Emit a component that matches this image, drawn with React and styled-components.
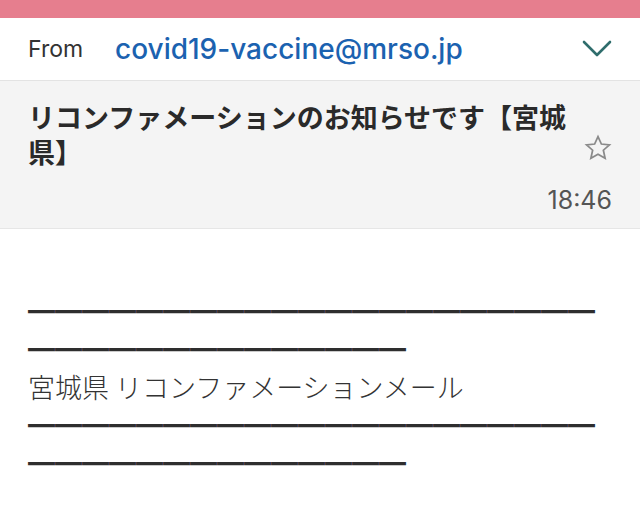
import React from "react";
import styled, { createGlobalStyle } from "styled-components";

const GlobalStyle = createGlobalStyle`
  html, body {
    margin: 0;
    padding: 0;
    background: #ffffff;
  }
  body {
    font-family: Inter, "Noto Sans CJK JP", sans-serif;
    -webkit-font-smoothing: antialiased;
  }
`;

const Page = styled.div`
  width: 640px;
  height: 526px;
  overflow: hidden;
  background: #ffffff;
`;

const TopBar = styled.div`
  height: 18px;
  background: #e67e8e;
`;

const FromRow = styled.div`
  display: flex;
  align-items: center;
  height: 62px;
  padding: 0 28px;
  border-bottom: 1px solid #e3e3e3;
`;

const FromLabel = styled.span`
  font-size: 23px;
  color: #333333;
  width: 87px;
  flex: none;
`;

const Sender = styled.span`
  flex: 1;
  font-size: 28px;
  font-weight: 500;
  color: #1b62b0;
`;

const SubjectBlock = styled.div`
  background: #f4f4f4;
  padding: 18px 28px 13px;
  border-bottom: 1px solid #e6e6e6;
`;

const SubjectRow = styled.div`
  display: flex;
  align-items: flex-end;
  justify-content: space-between;
`;

const Subject = styled.h1`
  margin: 0;
  width: 560px;
  font-family: "Noto Sans CJK JP", sans-serif;
  font-size: 27px;
  line-height: 35px;
  font-weight: 700;
  color: #2a2a2a;
`;

const StarIcon = styled.svg`
  flex: none;
  margin-bottom: 7px;
`;

const TimeRow = styled.div`
  display: flex;
  justify-content: flex-end;
  margin-top: 16px;
  font-size: 25px;
  color: #555555;
`;

const Body = styled.div`
  padding: 63px 28px 0;
`;

const BodyText = styled.p`
  margin: 0;
  width: 584px;
  font-family: "Noto Sans CJK JP", sans-serif;
  font-size: 27px;
  line-height: 38px;
  font-weight: 300;
  color: #333333;
  word-break: break-all;
`;

const Rule = styled.span`
  font-weight: 400;
  color: #2e2e2e;
`;

const Chevron = () => (
  <svg width="30" height="18" viewBox="0 0 30 18">
    <path d="M2 2 L15 15 L28 2" fill="none" stroke="#2f6d6c" strokeWidth="2.6" strokeLinecap="round" strokeLinejoin="round" />
  </svg>
);

const Star = () => (
  <StarIcon width="28" height="28" viewBox="0 0 24 24">
    <path
      d="M12 2.2 L14.9 8.6 L21.8 9.3 L16.6 13.9 L18.1 20.8 L12 17.3 L5.9 20.8 L7.4 13.9 L2.2 9.3 L9.1 8.6 Z"
      fill="none"
      stroke="#8a8a8a"
      strokeWidth="1.5"
      strokeLinejoin="miter"
    />
  </StarIcon>
);

const dashes = "━".repeat(35);

export default function App() {
  return (
    <Page>
      <GlobalStyle />
      <TopBar />
      <FromRow>
        <FromLabel>From</FromLabel>
        <Sender>covid19-vaccine@mrso.jp</Sender>
        <Chevron />
      </FromRow>
      <SubjectBlock>
        <SubjectRow>
          <Subject>リコンファメーションのお知らせです【宮城県】</Subject>
          <Star />
        </SubjectRow>
        <TimeRow>18:46</TimeRow>
      </SubjectBlock>
      <Body>
        <BodyText>
          <Rule>{dashes}</Rule>
          <br />
          宮城県 リコンファメーションメール
          <br />
          <Rule>{dashes}</Rule>
        </BodyText>
      </Body>
    </Page>
  );
}
